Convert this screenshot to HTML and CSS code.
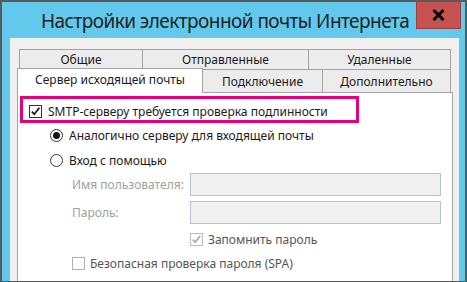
FILE: index.html
```html
<!DOCTYPE html>
<html lang="ru">
<head>
    <meta charset="UTF-8">
    <meta name="viewport" content="width=device-width, initial-scale=1.0">
    <title>Настройки электронной почты Интернета</title>
    <link rel="stylesheet" href="styles.css">
</head>
<body>
<div class="window">
    <div class="titlebar">
        <div class="title">Настройки электронной почты Интернета</div>
        <button class="close" aria-label="Закрыть">
            <svg width="13" height="12" viewBox="0 0 13 12"><path d="M1.5 1 L11.5 11 M11.5 1 L1.5 11" stroke="#000" stroke-width="3" fill="none"/></svg>
        </button>
    </div>

    <div class="dialog">
        <div class="tabs">
            <div class="tab-row">
                <div class="tab tab-general">Общие</div>
                <div class="tab tab-sent">Отправленные</div>
                <div class="tab tab-deleted">Удаленные</div>
            </div>
            <div class="tab-row tab-row-front">
                <div class="tab tab-outgoing selected">Сервер исходящей почты</div>
                <div class="tab tab-connection">Подключение</div>
                <div class="tab tab-advanced">Дополнительно</div>
            </div>
        </div>

        <div class="panel">
            <div class="highlight">
                <label class="option">
                    <span class="checkbox checked">
                        <svg width="11" height="11" viewBox="0 0 11 11"><path d="M1.8 5.6 L4.3 8.3 L9.3 1.8" stroke="#111" stroke-width="1.7" fill="none"/></svg>
                    </span>
                    SMTP-серверу требуется проверка подлинности
                </label>
            </div>

            <div class="radio-row first">
                <span class="radio on"></span>
                Аналогично серверу для входящей почты
            </div>
            <div class="radio-row">
                <span class="radio"></span>
                Вход с помощью
            </div>

            <div class="field">
                <span class="field-label">Имя пользователя:</span>
                <span class="input"></span>
            </div>
            <div class="field">
                <span class="field-label">Пароль:</span>
                <span class="input"></span>
            </div>

            <div class="check-row remember">
                <span class="checkbox disabled">
                    <svg width="11" height="11" viewBox="0 0 11 11"><path d="M1.8 5.6 L4.3 8.3 L9.3 1.8" stroke="#a8a8a8" stroke-width="1.7" fill="none"/></svg>
                </span>
                Запомнить пароль
            </div>
            <div class="check-row spa">
                <span class="checkbox light"></span>
                Безопасная проверка пароля (SPA)
            </div>
        </div>
    </div>
</div>
</body>
</html>
```

FILE: styles.css
```css
* { margin: 0; padding: 0; box-sizing: border-box; }
body { font-family: "Noto Sans", "Open Sans", sans-serif; font-size: 12px; color: #1a1a1a; background: #fff; }

.window { width: 467px; height: 282px; background: #63c9ec; border: 2px solid #5a5a5a; border-bottom-width: 1px; overflow: hidden; display: flex; flex-direction: column; }

.titlebar { height: 36px; display: flex; align-items: flex-start; flex-shrink: 0; }
.title { font-size: 19px; line-height: 20px; letter-spacing: -0.55px; padding: 9px 0 0 39px; color: #222; white-space: nowrap; flex: 1; min-width: 0; }
.close { width: 45px; height: 27px; margin-right: 4px; flex-shrink: 0; background: #c75050; border: 1px solid #9e3f3f; border-top: none; display: flex; align-items: center; justify-content: center; }

.dialog { flex: 1; background: #f0f0f0; margin: 0 6px 0 8px; padding: 11px 6px 0 7px; display: flex; flex-direction: column; }

.tabs { margin: 0 2px; }
.tab-row { display: flex; }
.tab { border: 1px solid #a3a3a3; background: #ececec; text-align: center; white-space: nowrap; margin-left: -1px; }
.tab-row .tab:first-child { margin-left: 0; }
.tab-general { width: 124px; }
.tab-sent { width: 167px; }
.tab-deleted { width: 143px; }
.tab-row > .tab { height: 21px; line-height: 19px; }

.tab-row-front { margin-top: -1px; height: 23px; align-items: flex-end; }
.tab-row-front > .tab { height: 23px; border-bottom: none; line-height: 18px; padding-top: 3px; }
.tab-row-front > .tab.selected { position: relative; z-index: 1; width: 186px; height: 25px; margin-left: -2px; margin-bottom: -1px; background: #fff; padding-top: 2px; }
.tab-connection { width: 121px; }
.tab-advanced { width: 129px; }

.panel { flex: 1; background: #fff; border: 1px solid #a3a3a3; border-bottom: none; padding: 3px 0 0 0; display: flex; flex-direction: column; align-items: flex-start; }

.highlight { margin-left: 2px; width: 339px; height: 27px; border: 3px solid #e6007e; padding: 4px 0 0 6px; }
.option { display: flex; align-items: center; gap: 6px; height: 17px; }

.checkbox { width: 13px; height: 13px; border: 1px solid #333; background: #fff; display: flex; align-items: center; justify-content: center; flex-shrink: 0; }
.checkbox.disabled { border-color: #bcbcbc; }
.checkbox.light { border-color: #b0b0b0; }

.radio-row { display: flex; align-items: center; gap: 6px; height: 20px; margin: 5px 0 0 32px; }
.radio-row.first { margin-top: 2px; }
.radio { width: 13px; height: 13px; border: 1px solid #333; border-radius: 50%; background: #fff; display: flex; align-items: center; justify-content: center; }
.radio.on::after { content: ""; width: 7px; height: 7px; border-radius: 50%; background: #111; }

.field { display: flex; align-items: center; margin: 3px 0 0 54px; }
.field + .field { margin-top: 5px; }
.field-label { width: 118px; color: #a0a0a0; }
.input { width: 251px; height: 23px; background: #f0f0f0; border: 1px solid #b3c4da; }

.check-row { display: flex; align-items: center; gap: 5px; height: 20px; color: #555; }
.remember { margin: 5px 0 0 172px; }
.spa { margin: 4px 0 0 54px; }
```
